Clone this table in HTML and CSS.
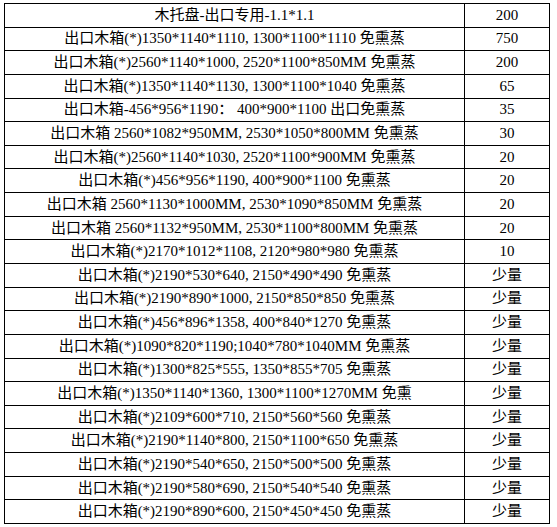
FILE: index.html
```html
<!DOCTYPE html>
<html lang="zh-CN">
<head>
<meta charset="utf-8">
<title>出口木箱</title>
<link rel="stylesheet" href="styles.css">
</head>
<body>
<div class="sheet">
  <div class="cell">木托盘-出口专用-1.1*1.1</div><div class="cell">200</div>
  <div class="cell">出口木箱(*)1350*1140*1110, 1300*1100*1110 免熏蒸</div><div class="cell">750</div>
  <div class="cell">出口木箱(*)2560*1140*1000, 2520*1100*850MM 免熏蒸</div><div class="cell">200</div>
  <div class="cell">出口木箱(*)1350*1140*1130, 1300*1100*1040 免熏蒸</div><div class="cell">65</div>
  <div class="cell">出口木箱-456*956*1190： 400*900*1100 出口免熏蒸</div><div class="cell">35</div>
  <div class="cell">出口木箱 2560*1082*950MM, 2530*1050*800MM 免熏蒸</div><div class="cell">30</div>
  <div class="cell">出口木箱(*)2560*1140*1030, 2520*1100*900MM 免熏蒸</div><div class="cell">20</div>
  <div class="cell">出口木箱(*)456*956*1190, 400*900*1100 免熏蒸</div><div class="cell">20</div>
  <div class="cell">出口木箱 2560*1130*1000MM, 2530*1090*850MM 免熏蒸</div><div class="cell">20</div>
  <div class="cell">出口木箱 2560*1132*950MM, 2530*1100*800MM 免熏蒸</div><div class="cell">20</div>
  <div class="cell">出口木箱(*)2170*1012*1108, 2120*980*980 免熏蒸</div><div class="cell">10</div>
  <div class="cell">出口木箱(*)2190*530*640, 2150*490*490 免熏蒸</div><div class="cell">少量</div>
  <div class="cell">出口木箱(*)2190*890*1000, 2150*850*850 免熏蒸</div><div class="cell">少量</div>
  <div class="cell">出口木箱(*)456*896*1358, 400*840*1270 免熏蒸</div><div class="cell">少量</div>
  <div class="cell">出口木箱(*)1090*820*1190;1040*780*1040MM 免熏蒸</div><div class="cell">少量</div>
  <div class="cell">出口木箱(*)1300*825*555, 1350*855*705 免熏蒸</div><div class="cell">少量</div>
  <div class="cell">出口木箱(*)1350*1140*1360, 1300*1100*1270MM 免熏</div><div class="cell">少量</div>
  <div class="cell">出口木箱(*)2109*600*710, 2150*560*560 免熏蒸</div><div class="cell">少量</div>
  <div class="cell">出口木箱(*)2190*1140*800, 2150*1100*650 免熏蒸</div><div class="cell">少量</div>
  <div class="cell">出口木箱(*)2190*540*650, 2150*500*500 免熏蒸</div><div class="cell">少量</div>
  <div class="cell">出口木箱(*)2190*580*690, 2150*540*540 免熏蒸</div><div class="cell">少量</div>
  <div class="cell">出口木箱(*)2190*890*600, 2150*450*450 免熏蒸</div><div class="cell">少量</div>
</div>
</body>
</html>
```

FILE: styles.css
```css
html, body {
  margin: 0;
  padding: 0;
  background: #fff;
}

.sheet {
  display: grid;
  grid-template-columns: 460px 85px;
  grid-template-rows: repeat(22, 1fr);
  width: 545px;
  height: 520px;
  margin: 3px 0 0 4px;
  border-top: 1px solid #000;
  border-left: 1px solid #000;
  font-family: "Liberation Serif", "Noto Sans CJK SC", serif;
  font-size: 15px;
  color: #000;
}

.cell {
  display: flex;
  align-items: center;
  justify-content: center;
  border-right: 1px solid #000;
  border-bottom: 1px solid #000;
  white-space: nowrap;
  line-height: 1;
  overflow: hidden;
}
```
